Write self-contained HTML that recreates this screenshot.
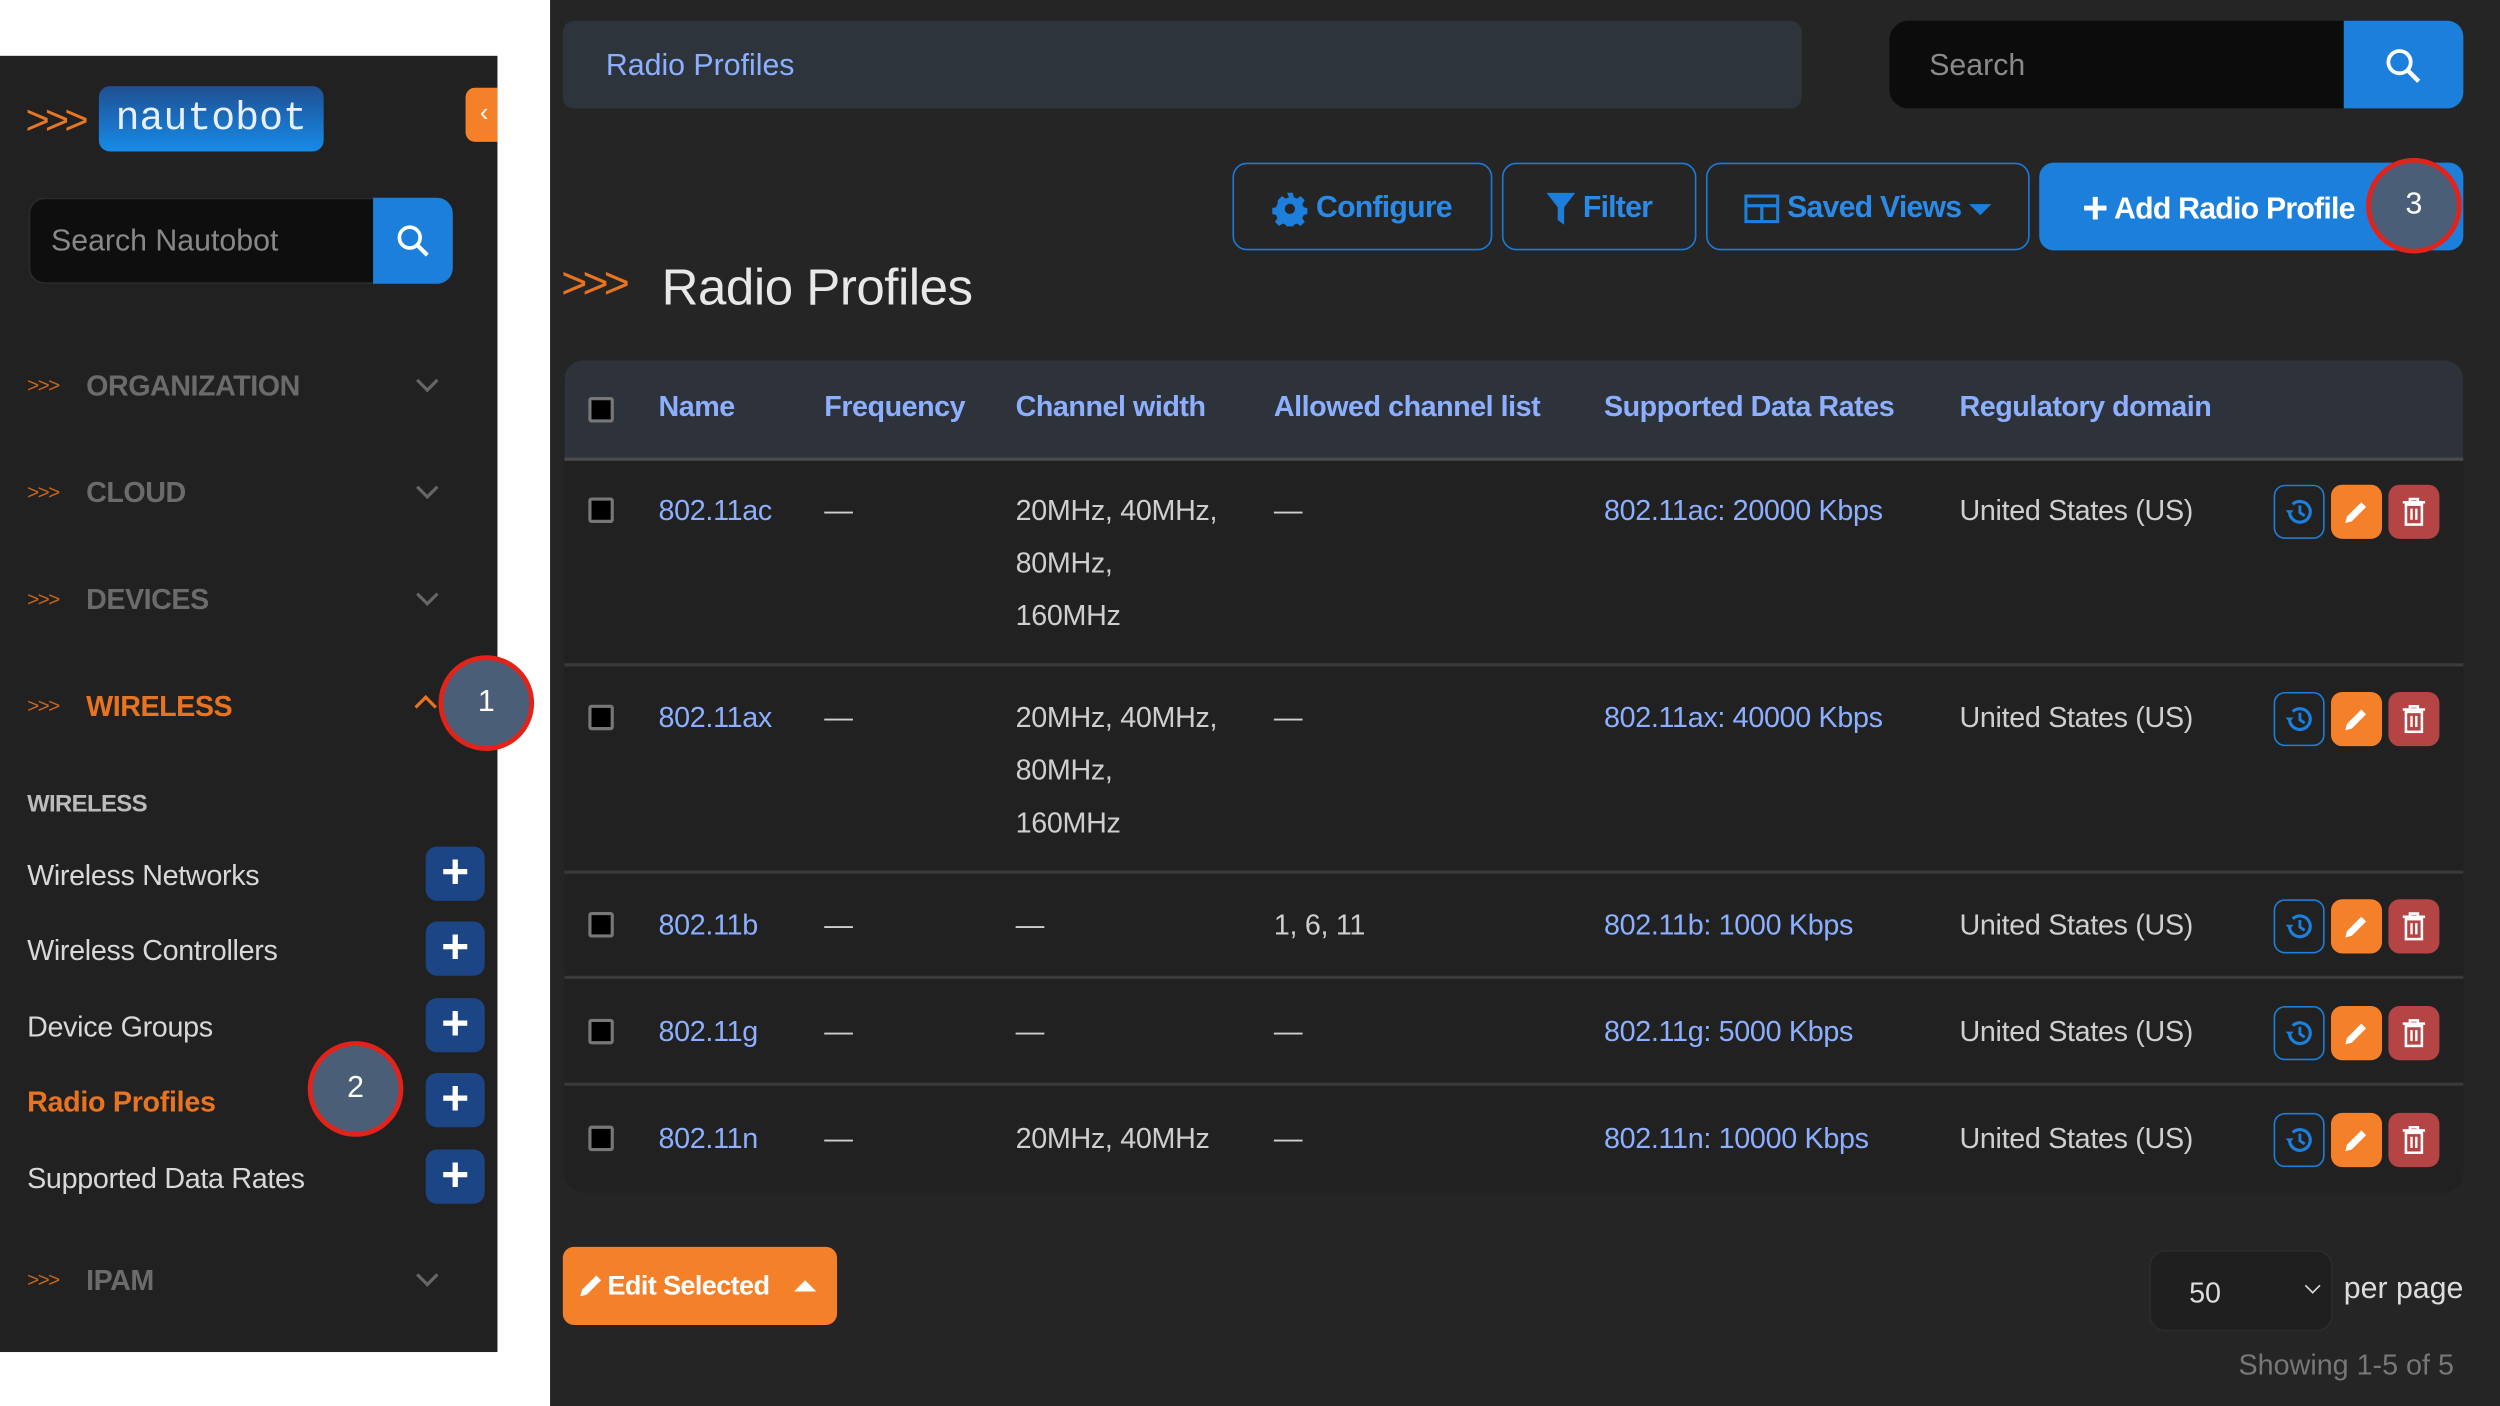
<!DOCTYPE html>
<html><head><meta charset="utf-8"><style>
*{margin:0;padding:0;box-sizing:border-box}
html,body{width:2500px;height:1406px;overflow:hidden;background:#fff}
#w{position:absolute;left:0;top:0;width:1568px;height:882px;transform:scale(1.59439);transform-origin:0 0;font-family:"Liberation Sans",sans-serif}
.a{position:absolute;white-space:nowrap}
.side{left:0;top:35px;width:312px;height:813px;background:#212121}
.main{left:345px;top:0;width:1223px;height:882px;background:#252525}
.nav{font-size:18px;color:#6b6b6b;font-weight:bold;letter-spacing:-0.3px}
.arr{font-size:13px;color:#c9661d;letter-spacing:-1px}
.chev{width:10px;height:10px;border-right:2px solid #666;border-bottom:2px solid #666;transform:rotate(45deg)}
.item{font-size:18px;color:#d8d8d8;letter-spacing:-0.2px}
.plus{width:37px;height:34px;border-radius:7px;background:#1c4585;color:#fff;font-size:30px;font-weight:bold;text-align:center;line-height:33px}
.badge{width:60px;height:60px;border-radius:50%;background:#4a5e78;border:3px solid #e3231a;color:#fff;font-size:19px;text-align:center;line-height:54px}
.btn{top:102px;height:55px;border:1.5px solid #1b7bd8;border-radius:9px;color:#2a8ae8;font-size:19px;font-weight:bold;display:flex;align-items:center;justify-content:center;gap:5px;letter-spacing:-0.5px}
.th{top:245px;font-size:18px;font-weight:bold;color:#8cb0ff;letter-spacing:-0.3px}
.td{font-size:18px;color:#cfcfcf;letter-spacing:-0.2px;line-height:33px}
.lk{color:#8cb0ff}
.cb{width:16px;height:16px;border:2px solid #777;background:#000;border-radius:2px}
.hl{height:2px;background:#3a3a3a;left:354px;width:1191px}
.ib{width:32px;height:34px;border-radius:7px;display:flex;align-items:center;justify-content:center}
</style></head><body><div id="w">
<div class="a side"></div>
<div class="a main"></div>

<!-- sidebar -->
<div class="a" style="left:16px;top:60px;font-size:26px;color:#e87722;letter-spacing:-3px;line-height:30px">&gt;&gt;&gt;</div>
<div class="a" style="left:62px;top:54px;width:141px;height:41px;border-radius:7px;background:linear-gradient(#1f4f92,#168be8);color:#e8f0ff;font-family:'Liberation Mono',monospace;font-size:25px;line-height:41px;text-align:center">nautobot</div>
<div class="a" style="left:292px;top:55px;width:20px;height:34px;background:#f5802a;border-radius:6px 0 0 6px;color:#fff;font-size:16px;line-height:34px;padding-left:9px">&lsaquo;</div>
<div class="a" style="left:18px;top:124px;width:218px;height:54px;background:#0e0e0e;border-radius:10px 0 0 10px;border:1px solid #2a2a2a;color:#888;font-size:19px;line-height:54px;padding-left:13px">Search Nautobot</div>
<div class="a" style="left:234px;top:124px;width:50px;height:54px;background:#1b7fdb;border-radius:0 10px 10px 0"><svg width="50" height="54"><circle cx="23" cy="25" r="6.5" fill="none" stroke="#fff" stroke-width="2.3"/><path d="M28 30l6 6" stroke="#fff" stroke-width="2.6"/></svg></div>

<div class="a arr" style="left:17px;top:234px">&gt;&gt;&gt;</div><div class="a nav" style="left:54px;top:232px">ORGANIZATION</div><div class="a chev" style="left:263px;top:234px"></div>
<div class="a arr" style="left:17px;top:301px">&gt;&gt;&gt;</div><div class="a nav" style="left:54px;top:299px">CLOUD</div><div class="a chev" style="left:263px;top:301px"></div>
<div class="a arr" style="left:17px;top:368px">&gt;&gt;&gt;</div><div class="a nav" style="left:54px;top:366px">DEVICES</div><div class="a chev" style="left:263px;top:368px"></div>
<div class="a arr" style="left:17px;top:435px">&gt;&gt;&gt;</div><div class="a nav" style="left:54px;top:433px;color:#e8741f">WIRELESS</div><div class="a" style="left:262px;top:438px;width:10px;height:10px;border-left:2px solid #e8741f;border-top:2px solid #e8741f;transform:rotate(45deg)"></div>
<div class="a" style="left:17px;top:496px;font-size:15px;color:#bbb;font-weight:bold;letter-spacing:-0.4px">WIRELESS</div>
<div class="a item" style="left:17px;top:539px">Wireless Networks</div><div class="a plus" style="left:267px;top:531px">+</div>
<div class="a item" style="left:17px;top:586px">Wireless Controllers</div><div class="a plus" style="left:267px;top:578px">+</div>
<div class="a item" style="left:17px;top:634px">Device Groups</div><div class="a plus" style="left:267px;top:626px">+</div>
<div class="a item" style="left:17px;top:681px;color:#e8741f;font-weight:bold">Radio Profiles</div><div class="a plus" style="left:267px;top:673px">+</div>
<div class="a item" style="left:17px;top:729px">Supported Data Rates</div><div class="a plus" style="left:267px;top:721px">+</div>
<div class="a arr" style="left:17px;top:795px">&gt;&gt;&gt;</div><div class="a nav" style="left:54px;top:793px">IPAM</div><div class="a chev" style="left:263px;top:795px"></div>

<!-- top bar -->
<div class="a" style="left:353px;top:13px;width:777px;height:55px;background:#2e343c;border-radius:7px;color:#8cb0ff;font-size:19px;line-height:57px;padding-left:27px">Radio Profiles</div>
<div class="a" style="left:1185px;top:13px;width:288px;height:55px;background:#0c0c0c;border-radius:12px 0 0 12px;color:#8a8a8a;font-size:19px;line-height:57px;padding-left:25px">Search</div>
<div class="a" style="left:1470px;top:13px;width:75px;height:55px;background:#1b7fdb;border-radius:0 10px 10px 0"><svg width="75" height="55"><circle cx="35" cy="26" r="7" fill="none" stroke="#fff" stroke-width="2.4"/><path d="M40 31l7 7" stroke="#fff" stroke-width="2.8"/></svg></div>

<!-- buttons -->
<div class="a btn" style="left:773px;width:163px;padding-top:3px"><svg width="22" height="22" viewBox="0 0 24 24"><path fill="#1b7fdb" d="M10 1h4l.6 3 2.2 1 2.6-1.7 2.8 2.8-1.7 2.6 1 2.2 3 .6v4l-3 .6-1 2.2 1.7 2.6-2.8 2.8-2.6-1.7-2.2 1-.6 3h-4l-.6-3-2.2-1-2.6 1.7-2.8-2.8 1.7-2.6-1-2.2-3-.6v-4l3-.6 1-2.2L3.8 6.1l2.8-2.8 2.6 1.7 2.2-1zM12 8.5a3.5 3.5 0 100 7 3.5 3.5 0 000-7z"/></svg>Configure</div>
<div class="a btn" style="left:942px;width:122px;padding-top:3px"><svg width="18" height="22" viewBox="0 0 18 22"><path fill="#1b7fdb" d="M0 1h18l-7 9v11l-4-3v-8z"/></svg>Filter</div>
<div class="a btn" style="left:1070px;width:203px;padding-top:3px"><svg width="22" height="18" viewBox="0 0 22 18"><rect x="1" y="1" width="20" height="16" fill="none" stroke="#1b7fdb" stroke-width="2"/><path d="M1 7h20M11 7v10" stroke="#1b7fdb" stroke-width="2"/></svg>Saved Views<svg width="14" height="10"><path d="M0 2h14L7 9z" fill="#1b7fdb"/></svg></div>
<div class="a" style="left:1279px;top:102px;width:266px;height:55px;background:#1b7fdb;border-radius:9px;color:#fff;font-size:19px;font-weight:bold;line-height:58px;padding-left:27px;letter-spacing:-0.5px"><span style="font-size:28px;vertical-align:-3px">+</span> Add Radio Profile</div>

<!-- title -->
<div class="a" style="left:352px;top:162px;font-size:28px;color:#e8741f;letter-spacing:-3px">&gt;&gt;&gt;</div>
<div class="a" style="left:415px;top:162px;font-size:32px;color:#e8e8e8;letter-spacing:-0.3px">Radio Profiles</div>

<!-- table -->
<div class="a" style="left:354px;top:226px;width:1191px;height:522px;background:#212121;border-radius:12px;overflow:hidden"><div style="height:62px;background:#2e333b"></div></div>
<div class="a hl" style="top:287px;background:#4a4a4a"></div>
<div class="a hl" style="top:416px"></div><div class="a hl" style="top:546px"></div><div class="a hl" style="top:612px"></div><div class="a hl" style="top:679px"></div>
<div class="a cb" style="left:369px;top:249px"></div>
<div class="a th" style="left:413px">Name</div><div class="a th" style="left:517px">Frequency</div><div class="a th" style="left:637px">Channel width</div><div class="a th" style="left:799px">Allowed channel list</div><div class="a th" style="left:1006px">Supported Data Rates</div><div class="a th" style="left:1229px">Regulatory domain</div>

<div class="a cb" style="left:369px;top:312px"></div><div class="a td lk" style="left:413px;top:304px">802.11ac</div><div class="a td" style="left:517px;top:304px">—</div><div class="a td" style="left:637px;top:304px">20MHz, 40MHz,<br>80MHz,<br>160MHz</div><div class="a td" style="left:799px;top:304px">—</div><div class="a td lk" style="left:1006px;top:304px">802.11ac: 20000 Kbps</div><div class="a td" style="left:1229px;top:304px">United States (US)</div>
<div class="a cb" style="left:369px;top:442px"></div><div class="a td lk" style="left:413px;top:434px">802.11ax</div><div class="a td" style="left:517px;top:434px">—</div><div class="a td" style="left:637px;top:434px">20MHz, 40MHz,<br>80MHz,<br>160MHz</div><div class="a td" style="left:799px;top:434px">—</div><div class="a td lk" style="left:1006px;top:434px">802.11ax: 40000 Kbps</div><div class="a td" style="left:1229px;top:434px">United States (US)</div>
<div class="a cb" style="left:369px;top:572px"></div><div class="a td lk" style="left:413px;top:564px">802.11b</div><div class="a td" style="left:517px;top:564px">—</div><div class="a td" style="left:637px;top:564px">—</div><div class="a td" style="left:799px;top:564px">1, 6, 11</div><div class="a td lk" style="left:1006px;top:564px">802.11b: 1000 Kbps</div><div class="a td" style="left:1229px;top:564px">United States (US)</div>
<div class="a cb" style="left:369px;top:639px"></div><div class="a td lk" style="left:413px;top:631px">802.11g</div><div class="a td" style="left:517px;top:631px">—</div><div class="a td" style="left:637px;top:631px">—</div><div class="a td" style="left:799px;top:631px">—</div><div class="a td lk" style="left:1006px;top:631px">802.11g: 5000 Kbps</div><div class="a td" style="left:1229px;top:631px">United States (US)</div>
<div class="a cb" style="left:369px;top:706px"></div><div class="a td lk" style="left:413px;top:698px">802.11n</div><div class="a td" style="left:517px;top:698px">—</div><div class="a td" style="left:637px;top:698px">20MHz, 40MHz</div><div class="a td" style="left:799px;top:698px">—</div><div class="a td lk" style="left:1006px;top:698px">802.11n: 10000 Kbps</div><div class="a td" style="left:1229px;top:698px">United States (US)</div>

<div id="acts"></div>
<script>
var ys=[304,434,564,631,698],h='';
ys.forEach(function(y){
h+='<div class="a ib" style="left:1426px;top:'+y+'px;border:1.5px solid #1b7fdb"><svg width="20" height="20" viewBox="0 0 20 20"><path d="M4 10a6.5 6.5 0 1 0 2-4.7" fill="none" stroke="#1b7fdb" stroke-width="2"/><path d="M1.5 9h5l-2.5 3z" fill="#1b7fdb"/><path d="M10.5 6v4.5l3 2" fill="none" stroke="#1b7fdb" stroke-width="1.8"/></svg></div>';
h+='<div class="a ib" style="left:1462px;top:'+y+'px;background:#f5802a"><svg width="18" height="18" viewBox="0 0 18 18"><path d="M2 16l1-4 9-9 3 3-9 9z" fill="#fff"/></svg></div>';
h+='<div class="a ib" style="left:1498px;top:'+y+'px;background:#b54444"><svg width="16" height="18" viewBox="0 0 16 18"><path d="M1 3h14M5.5 3V1h5v2" stroke="#fff" stroke-width="1.6" fill="none"/><rect x="3" y="4.5" width="10" height="12.5" fill="none" stroke="#fff" stroke-width="1.6"/><path d="M6.5 7v7M9.5 7v7" stroke="#fff" stroke-width="1.5"/></svg></div>';
});
document.getElementById('acts').innerHTML=h;
</script>

<!-- footer -->
<div class="a" style="left:353px;top:782px;width:172px;height:49px;background:#f5802a;border-radius:7px;color:#fff;font-size:17px;font-weight:bold;line-height:50px;padding-left:8px;letter-spacing:-0.4px"><svg width="20" height="18" viewBox="0 0 18 18" style="vertical-align:-3px"><path d="M2 16l1-4 9-9 3 3-9 9z" fill="#fff"/></svg>Edit Selected<svg width="16" height="12" style="margin-left:14px;vertical-align:0"><path d="M1 10h14L8 3z" fill="#fff"/></svg></div>
<div class="a" style="left:1348px;top:784px;width:115px;height:51px;background:#1f1f1f;border:1px solid #2c2c2c;border-radius:10px;color:#ddd;font-size:18px;line-height:53px;padding-left:24px">50</div>
<div class="a" style="left:1447px;top:803px;width:7px;height:7px;border-right:1.6px solid #ddd;border-bottom:1.6px solid #ddd;transform:rotate(45deg)"></div>
<div class="a" style="left:1470px;top:798px;font-size:19px;color:#ddd">per page</div>
<div class="a" style="left:1404px;top:846px;font-size:18px;color:#777">Showing 1-5 of 5</div>

<!-- badges -->
<div class="a badge" style="left:275px;top:411px">1</div>
<div class="a badge" style="left:193px;top:653px">2</div>
<div class="a badge" style="left:1484px;top:99px">3</div>
</div></body></html>
